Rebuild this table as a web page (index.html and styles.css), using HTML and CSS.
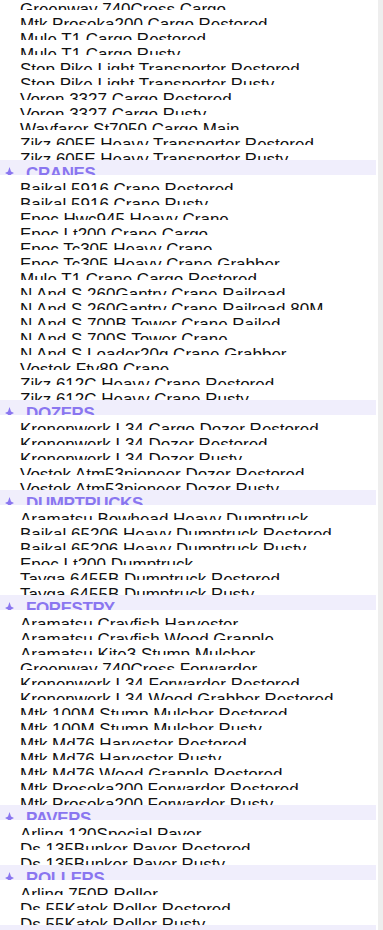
FILE: index.html
```html
<!DOCTYPE html>
<html lang="en">
<head>
<meta charset="utf-8">
<title>Vehicles</title>
<link rel="stylesheet" href="styles.css">
</head>
<body>
<div class="frame">
  <ul class="list">
    <li class="row"><span>Greenway 740Cross Cargo</span></li>
    <li class="row"><span>Mtk Prosoka200 Cargo Restored</span></li>
    <li class="row"><span>Mule T1 Cargo Restored</span></li>
    <li class="row"><span>Mule T1 Cargo Rusty</span></li>
    <li class="row"><span>Stop Pike Light Transporter Restored</span></li>
    <li class="row"><span>Stop Pike Light Transporter Rusty</span></li>
    <li class="row"><span>Voron 3327 Cargo Restored</span></li>
    <li class="row"><span>Voron 3327 Cargo Rusty</span></li>
    <li class="row"><span>Wayfarer St7050 Cargo Main</span></li>
    <li class="row"><span>Zikz 605E Heavy Transporter Restored</span></li>
    <li class="row"><span>Zikz 605E Heavy Transporter Rusty</span></li>

    <li class="group"><svg class="mark" viewBox="0 0 9 12"><path d="M4.5 0 L6 4.5 L9 6 L6 7.5 L4.5 12 L3 7.5 L0 6 L3 4.5 Z"/></svg><span>Cranes</span></li>
    <li class="row"><span>Baikal 5916 Crane Restored</span></li>
    <li class="row"><span>Baikal 5916 Crane Rusty</span></li>
    <li class="row"><span>Epoc Hwc945 Heavy Crane</span></li>
    <li class="row"><span>Epoc Lt200 Crane Cargo</span></li>
    <li class="row"><span>Epoc Tc305 Heavy Crane</span></li>
    <li class="row"><span>Epoc Tc305 Heavy Crane Grabber</span></li>
    <li class="row"><span>Mule T1 Crane Cargo Restored</span></li>
    <li class="row"><span>N And S 260Gantry Crane Railroad</span></li>
    <li class="row"><span>N And S 260Gantry Crane Railroad 80M</span></li>
    <li class="row"><span>N And S 700B Tower Crane Railed</span></li>
    <li class="row"><span>N And S 700S Tower Crane</span></li>
    <li class="row"><span>N And S Loader20g Crane Grabber</span></li>
    <li class="row"><span>Vostok Ftv89 Crane</span></li>
    <li class="row"><span>Zikz 612C Heavy Crane Restored</span></li>
    <li class="row"><span>Zikz 612C Heavy Crane Rusty</span></li>

    <li class="group"><svg class="mark" viewBox="0 0 9 12"><path d="M4.5 0 L6 4.5 L9 6 L6 7.5 L4.5 12 L3 7.5 L0 6 L3 4.5 Z"/></svg><span>Dozers</span></li>
    <li class="row"><span>Kronenwerk L34 Cargo Dozer Restored</span></li>
    <li class="row"><span>Kronenwerk L34 Dozer Restored</span></li>
    <li class="row"><span>Kronenwerk L34 Dozer Rusty</span></li>
    <li class="row"><span>Vostok Atm53pioneer Dozer Restored</span></li>
    <li class="row"><span>Vostok Atm53pioneer Dozer Rusty</span></li>

    <li class="group"><svg class="mark" viewBox="0 0 9 12"><path d="M4.5 0 L6 4.5 L9 6 L6 7.5 L4.5 12 L3 7.5 L0 6 L3 4.5 Z"/></svg><span>Dumptrucks</span></li>
    <li class="row"><span>Aramatsu Bowhead Heavy Dumptruck</span></li>
    <li class="row"><span>Baikal 65206 Heavy Dumptruck Restored</span></li>
    <li class="row"><span>Baikal 65206 Heavy Dumptruck Rusty</span></li>
    <li class="row"><span>Epoc Lt200 Dumptruck</span></li>
    <li class="row"><span>Tayga 6455B Dumptruck Restored</span></li>
    <li class="row"><span>Tayga 6455B Dumptruck Rusty</span></li>

    <li class="group"><svg class="mark" viewBox="0 0 9 12"><path d="M4.5 0 L6 4.5 L9 6 L6 7.5 L4.5 12 L3 7.5 L0 6 L3 4.5 Z"/></svg><span>Forestry</span></li>
    <li class="row"><span>Aramatsu Crayfish Harvester</span></li>
    <li class="row"><span>Aramatsu Crayfish Wood Grapple</span></li>
    <li class="row"><span>Aramatsu Kite3 Stump Mulcher</span></li>
    <li class="row"><span>Greenway 740Cross Forwarder</span></li>
    <li class="row"><span>Kronenwerk L34 Forwarder Restored</span></li>
    <li class="row"><span>Kronenwerk L34 Wood Grabber Restored</span></li>
    <li class="row"><span>Mtk 100M Stump Mulcher Restored</span></li>
    <li class="row"><span>Mtk 100M Stump Mulcher Rusty</span></li>
    <li class="row"><span>Mtk Md76 Harvester Restored</span></li>
    <li class="row"><span>Mtk Md76 Harvester Rusty</span></li>
    <li class="row"><span>Mtk Md76 Wood Grapple Restored</span></li>
    <li class="row"><span>Mtk Prosoka200 Forwarder Restored</span></li>
    <li class="row"><span>Mtk Prosoka200 Forwarder Rusty</span></li>

    <li class="group"><svg class="mark" viewBox="0 0 9 12"><path d="M4.5 0 L6 4.5 L9 6 L6 7.5 L4.5 12 L3 7.5 L0 6 L3 4.5 Z"/></svg><span>Pavers</span></li>
    <li class="row"><span>Arling 120Special Paver</span></li>
    <li class="row"><span>Ds 135Bunker Paver Restored</span></li>
    <li class="row"><span>Ds 135Bunker Paver Rusty</span></li>

    <li class="group"><svg class="mark" viewBox="0 0 9 12"><path d="M4.5 0 L6 4.5 L9 6 L6 7.5 L4.5 12 L3 7.5 L0 6 L3 4.5 Z"/></svg><span>Rollers</span></li>
    <li class="row"><span>Arling 750R Roller</span></li>
    <li class="row"><span>Ds 55Katok Roller Restored</span></li>
    <li class="row"><span>Ds 55Katok Roller Rusty</span></li>

    <li class="group"><svg class="mark" viewBox="0 0 9 12"><path d="M4.5 0 L6 4.5 L9 6 L6 7.5 L4.5 12 L3 7.5 L0 6 L3 4.5 Z"/></svg><span>Scrapers</span></li>
  </ul>
  <div class="track"></div>
</div>
</body>
</html>
```

FILE: styles.css
```css
html, body {
  margin: 0;
  padding: 0;
  background: #ffffff;
}

body {
  height: 930px;
  overflow: hidden;
  font-family: "Liberation Sans", Arial, sans-serif;
}

.frame {
  display: flex;
  gap: 2px;
  height: 930px;
  overflow: hidden;
}

.list {
  list-style: none;
  margin: -5px 0 0 0;
  padding: 0;
  width: 376px;
  flex: none;
}

.row,
.group {
  height: 15px;
  overflow: hidden;
  box-sizing: border-box;
  white-space: nowrap;
  line-height: 15px;
}

.row {
  padding: 6.5px 0 0 20px;
  font-size: 17px;
  color: #111111;
}

.group {
  display: flex;
  align-items: flex-start;
  padding: 0 0 0 5px;
  background: #f0eefc;
  color: #8a76f0;
  font-size: 17px;
  font-weight: bold;
  letter-spacing: -0.4px;
  text-transform: uppercase;
}

.group .mark {
  width: 9px;
  height: 12px;
  margin: 7px 12px 0 0;
  fill: #8a76f0;
  flex: none;
}

.group span {
  display: block;
  padding-top: 6px;
}

.track {
  flex: none;
  width: 5px;
  height: 930px;
  background: #eeeeee;
}
```
